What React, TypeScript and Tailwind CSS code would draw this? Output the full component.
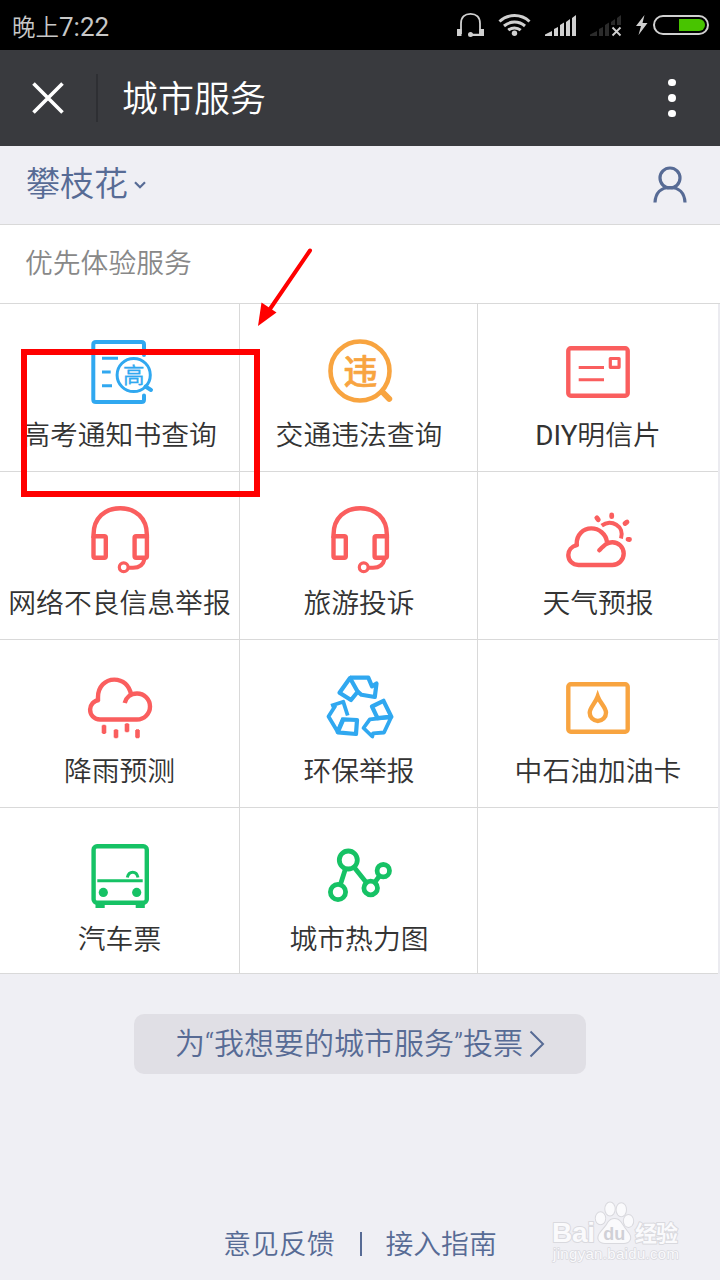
import type { ReactNode } from "react";
import clsx from "clsx";

const RED = "#fa5e5e";
const BLUE = "#30a8f0";
const ORANGE = "#f8a440";
const GREEN = "#16c265";

function Glyph({
  color,
  width = 4.4,
  className,
  children,
}: {
  color: string;
  width?: number;
  className?: string;
  children: ReactNode;
}) {
  return (
    <svg
      viewBox="0 0 71 72"
      className={clsx("w-[71px] h-[72px] shrink-0", className)}
      fill="none"
      stroke={color}
      strokeWidth={width}
      strokeLinejoin="round"
      aria-hidden="true"
    >
      {children}
    </svg>
  );
}

function ExamIcon() {
  return (
    <Glyph color={BLUE} width={4}>
      <path d="M60 19V8.5Q60 6 57.5 6H12Q9.3 6 9.3 8.5V63.5Q9.3 66 12 66H57.5Q60 66 60 63.5V59.5" strokeLinecap="round" />
      <path d="M18 22.3H34M18 36H26.7M18 49.7H28" strokeWidth={3} />
      <circle cx="49.7" cy="39" r="16.6" strokeWidth={3} />
      <path d="M61.5 50.5L67 54" strokeWidth={4} strokeLinecap="round" />
      <text x="49.7" y="46.5" fontSize="21.5" fontWeight="400" textAnchor="middle" fill={BLUE} stroke={BLUE} strokeWidth={0.3}>
        高
      </text>
    </Glyph>
  );
}

function ViolationIcon() {
  return (
    <Glyph color={ORANGE} width={4.6}>
      <circle cx="37" cy="35" r="29.5" />
      <path d="M59.5 56L66.2 62.8" strokeWidth={6} strokeLinecap="round" />
      <text x="37.5" y="48" fontSize="34" fontWeight="500" textAnchor="middle" fill={ORANGE} stroke={ORANGE} strokeWidth={0.6}>
        违
      </text>
    </Glyph>
  );
}

function PostcardIcon() {
  return (
    <Glyph color={RED}>
      <rect x="6.3" y="12.3" width="59.4" height="47.4" rx="2.5" />
      <path d="M16.7 31.4H42M16.7 43.7H42" strokeWidth={3} />
      <rect x="48.3" y="22.5" width="8.8" height="8.8" strokeWidth={3.2} />
    </Glyph>
  );
}

function HeadsetIcon({ className }: { className?: string }) {
  return (
    <Glyph color={RED} className={className}>
      <path d="M9.5 34V30.9C9.5 14 21 4.2 36.2 4.2S62.9 14 62.9 30.9V34" />
      <rect x="9.5" y="32.2" width="12.3" height="21.6" rx="1.5" />
      <rect x="50.6" y="32.2" width="12.3" height="21.6" rx="1.5" />
      <circle cx="39.7" cy="63.3" r="4.4" strokeWidth={3.2} />
      <path d="M44.5 63.7H49C56 63.7 59.5 60 60.5 55" strokeWidth={4} />
    </Glyph>
  );
}

function WeatherIcon() {
  return (
    <Glyph color={RED}>
      <path d="M14.7 42V39.5C14.7 31 21 24.4 29.3 24.4C37 24.4 44 30 45 38" />
      <path d="M14.7 41.2C9.5 42.5 6.3 46.5 6.3 51C6.3 56.5 10.5 61 16.5 61H50.3A11.4 11.4 0 0 0 50.3 38.2C45 38.2 42 41.5 37.3 46.3" strokeLinecap="round" />
      <path d="M39.7 21.6C49 14.5 63 22 59 34.5" strokeWidth={4} />
      <path d="M34.8 13.8L36.3 15.8M49.7 11V12.7M65 18L63 19.5M66 35.3L67.5 35.5" strokeWidth={4.8} strokeLinecap="round" />
    </Glyph>
  );
}

function RainIcon() {
  return (
    <Glyph color={RED}>
      <path d="M14 29V25C14 15 21 7.6 30.3 7.6C39 7.6 45.5 13.5 47 22.5" />
      <path d="M15.5 27.7C9.5 28.5 6.1 33 6.1 37.5C6.1 43 10 47.5 16 47.5H53A13 13 0 0 0 53 21.5C46.5 21.5 42 25.5 40.7 31" />
      <path d="M20 53.5V61M32 58V65.5M43 52V59.5M53.5 58V65.5" strokeWidth={4.6} />
      <path d="M20 52.7V62M32 57.3V66.3M43 51.3V60.3M53.5 57.3V66.3" strokeWidth={3} />
    </Glyph>
  );
}

function RecycleIcon() {
  return (
    <Glyph color={BLUE} width={4.2}>
      <path d="M27 6L16.5 20.7L28 28L34.7 19.7Z" />
      <path d="M27 5.7H45.3L49 14.3L53.5 11.5L51.8 25L38.5 22.8L34.7 19.7" />
      <path d="M8 33.8L20.3 29.8L24.7 43.5M12.5 33.5L5.5 44.5L14.5 59.5L20.3 46" strokeWidth={3.8} />
      <path d="M20.3 47.3L34 48L33 62L14.7 60.3Z" />
      <path d="M49 34.5L60.5 28.8L68.3 44.7L54.5 46.2Z" />
      <path d="M68.3 45L61 60.5L50 61.3L49.3 64.5L40.5 56L46.8 47.3L68.3 45" strokeWidth={3.8} />
    </Glyph>
  );
}

function FuelCardIcon() {
  return (
    <Glyph color={ORANGE}>
      <rect x="6.3" y="12.3" width="59.4" height="47.4" rx="2.5" />
      <path d="M35.7 24.5C33.5 31 27.7 35.5 27.7 40.8A8.1 8.1 0 0 0 44 40.8C44 35.5 38 31 35.7 24.5Z" strokeLinejoin="miter" strokeMiterlimit={8} />
    </Glyph>
  );
}

function BusIcon() {
  return (
    <Glyph color={GREEN}>
      <rect x="9.6" y="6.2" width="53.2" height="56.5" rx="3.5" />
      <path d="M13.3 40.7H58.7M43.3 37.5C45 30.5 52.5 30.5 54 37.5" strokeWidth={3} />
      <circle cx="19.3" cy="52.4" r="4.6" fill={GREEN} stroke="none" />
      <circle cx="52.7" cy="52.4" r="4.6" fill={GREEN} stroke="none" />
      <path d="M11.5 65.5H20.7M51.7 65.5H60.8" strokeWidth={5} />
    </Glyph>
  );
}

function HeatMapIcon() {
  return (
    <Glyph color={GREEN} width={4.8}>
      <path d="M25.3 20L15 52M25.3 20L47.7 48L60.3 30.7" />
      <circle cx="25.3" cy="20" r="9" fill="#fff" />
      <circle cx="15" cy="52" r="7.6" fill="#fff" />
      <circle cx="47.7" cy="48" r="6.8" fill="#fff" />
      <circle cx="60.3" cy="30.7" r="6.2" fill="#fff" />
    </Glyph>
  );
}

const services: { title: ReactNode; icon: ReactNode }[] = [
  { title: "高考通知书查询", icon: <ExamIcon /> },
  { title: "交通违法查询", icon: <ViolationIcon /> },
  { title: <><span className="font-['Roboto'] font-normal">DIY</span>明信片</>, icon: <PostcardIcon /> },
  { title: "网络不良信息举报", icon: <HeadsetIcon /> },
  { title: "旅游投诉", icon: <HeadsetIcon className="translate-x-px" /> },
  { title: "天气预报", icon: <WeatherIcon /> },
  { title: "降雨预测", icon: <RainIcon /> },
  { title: "环保举报", icon: <RecycleIcon /> },
  { title: "中石油加油卡", icon: <FuelCardIcon /> },
  { title: "汽车票", icon: <BusIcon /> },
  { title: "城市热力图", icon: <HeatMapIcon /> },
  { title: "", icon: null },
];

function StatusBar() {
  return (
    <div className="flex h-[50px] items-center justify-between bg-black pl-3 text-[#c8c8c8]">
      <div className="flex items-center pt-[3px] leading-none">
        <span className="text-[23.5px] font-[350]">晚上</span>
        <span className="font-['Roboto'] text-[26px]">7:22</span>
      </div>
      <svg viewBox="450 0 270 50" className="h-[50px] w-[270px]" fill="none" stroke="#d0d0d0" aria-hidden="true">
        {/* headset */}
        <path d="M461 34V23.5C461 17 465 13.8 470.5 13.8S480 17 480 23.5V34" strokeWidth="1.8" />
        <path d="M457 29H461.5V36H457ZM479.5 29H484V36H479.5ZM470 33.8H480V36H470Z" fill="#d0d0d0" stroke="none" />
        <circle cx="470.5" cy="34.5" r="2.5" fill="#d0d0d0" stroke="none" />
        {/* wifi */}
        <path d="M499.5 21.5A22 22 0 0 1 529.5 21.5M504 26A16 16 0 0 1 525 26M508.3 30.2A9.5 9.5 0 0 1 520.7 30.2" strokeWidth="3" />
        <circle cx="514.5" cy="33.3" r="2.7" fill="#d0d0d0" stroke="none" />
        {/* signal, sim 1 and sim 2 */}
        <path d="M545 36V34.5L552 31V36ZM554 36V29L558 27V36ZM560 36V25L564 22.5V36ZM566 36V22L570 19V36ZM572 36V18L576 15V36Z" fill="#d0d0d0" stroke="none" />
        <path d="M590 36V34.5L597 31V36ZM599 36V29L603 27V36ZM605 36V25L609 22.5V36ZM611 25V22L615 19V25ZM617 25V18L621 15V25Z" fill="#2b2b2b" stroke="none" />
        <path d="M612.5 27.5L620.5 35.5M620.5 27.5L612.5 35.5" strokeWidth="1.8" />
        {/* charging battery */}
        <path d="M644.5 15L636 26H641L638.5 35L647.5 23H642.5Z" fill="#d0d0d0" stroke="none" />
        <rect x="654" y="16" width="54" height="18" rx="9" strokeWidth="2" />
        <path d="M679 19H699A6 6 0 0 1 699 31H679Z" fill="#48c400" stroke="none" />
      </svg>
    </div>
  );
}

function TitleBar() {
  return (
    <div className="flex h-24 items-center bg-[#393a3e] text-white">
      <svg viewBox="0 0 32 32" className="ml-8 size-8" fill="none" stroke="currentColor" strokeWidth="3.6" aria-hidden="true">
        <path d="M1.5 1.5L30.5 30.5M30.5 1.5L1.5 30.5" />
      </svg>
      <div className="ml-8 h-12 w-0.5 bg-[#2e2f33]" />
      <h1 className="ml-6 pb-[5px] text-[36px] leading-none font-[350]">城市服务</h1>
      <div className="mr-[44.5px] ml-auto flex flex-col gap-2">
        <span className="size-[7.5px] rounded-full bg-white" />
        <span className="size-[7.5px] rounded-full bg-white" />
        <span className="size-[7.5px] rounded-full bg-white" />
      </div>
    </div>
  );
}

function LocationBar() {
  return (
    <div className="flex h-[79px] items-center border-b border-[#d9d9d9] pr-[33px] pl-[26px] text-[#576b95]">
      <span className="pb-[7px] text-[34px] leading-none font-[350]">攀枝花</span>
      <svg viewBox="0 0 12 8" className="ml-1.5 h-2 w-3" fill="none" stroke="currentColor" strokeWidth="2.2" aria-hidden="true">
        <path d="M1 1.2L6 6.2L11 1.2" />
      </svg>
      <svg viewBox="0 0 34 38" className="ml-auto h-[38px] w-[34px]" fill="none" stroke="currentColor" strokeWidth="3.2" aria-hidden="true">
        <circle cx="17" cy="12" r="10" />
        <path d="M2 36.5C2.5 27 8 21.5 17 21.5S31.5 27 32 36.5" />
      </svg>
    </div>
  );
}

function ServiceGrid() {
  return (
    <div className="grid grid-cols-[240px_238px_240px] grid-rows-[168px_168px_168px_166px] border-r-2 border-[#ebebf0]">
      {services.map(({ title, icon }, i) => (
        <div
          key={i}
          className={clsx(
            "flex flex-col items-center border-b border-[#d9d9d9] bg-white pt-8",
            i % 3 < 2 ? "border-r" : "pr-px",
          )}
        >
          {icon}
          <span
            className={clsx(
              "mt-[5px] text-[27.8px] leading-10 font-[350] whitespace-nowrap text-[#333]",
              i % 3 > 0 && "pl-px",
            )}
          >
            {title}
          </span>
        </div>
      ))}
    </div>
  );
}

function Highlight() {
  return (
    <>
      <div className="absolute top-[349px] left-[21px] h-[148px] w-[239px] border-6 border-[#f00]" />
      <svg viewBox="0 0 60 84" className="absolute top-[246px] left-[254px] h-[84px] w-[60px]" fill="#f00" aria-hidden="true">
        <path d="M56 4.5L16 63" stroke="#f00" strokeWidth="4" strokeLinecap="round" />
        <path d="M4 80L7.5 56.5L22.5 66.5Z" />
      </svg>
    </>
  );
}

function Watermark() {
  return (
    <svg
      viewBox="0 0 140 70"
      className="absolute top-[1197px] left-[548px] h-[70px] w-[140px] font-['Liberation_Sans','Noto_Sans_CJK_SC',sans-serif]"
      fill="#fafafc"
      stroke="#d9d9de"
      strokeWidth="2"
      strokeLinejoin="round"
      paintOrder="stroke"
    >
      <text x="4" y="45" fontSize="28" fontWeight="700" textLength="43">Bai</text>
      <ellipse cx="52.5" cy="21.3" rx="4.7" ry="6" />
      <ellipse cx="62" cy="12" rx="4.7" ry="6.5" />
      <ellipse cx="73.3" cy="12.7" rx="4.7" ry="6.5" />
      <ellipse cx="80.5" cy="24" rx="4.7" ry="6" />
      <path d="M60.5 25C58 30 54 33 51.5 37C48.5 42.5 52 46.5 58 46H75C81 46.5 84 42 81 37C78 33 75 29 72.5 25C69.5 21 63.5 21 60.5 25Z" />
      <text x="66.3" y="42.5" fontSize="18" fontWeight="700" textAnchor="middle" fill="#d0d0d6" stroke="none">du</text>
      <text x="87" y="44" fontSize="22" fontWeight="700" textLength="43">经验</text>
      <text x="5" y="62" fontSize="15" strokeWidth="1.5" textLength="126">jingyan.baidu.com</text>
    </svg>
  );
}

export default function App() {
  return (
    <div className="relative flex h-[1280px] w-[720px] flex-col overflow-hidden bg-[#efeff4] font-['Noto_Sans_CJK_SC',sans-serif]">
      <StatusBar />
      <TitleBar />
      <LocationBar />
      <h2 className="h-[79px] border-b border-[#d9d9d9] bg-white pl-[25px] text-[27.8px] leading-[73px] font-[350] text-[#888]">
        优先体验服务
      </h2>
      <ServiceGrid />

      <button className="mt-10 flex h-15 w-[452px] items-center justify-center gap-1.5 self-center rounded-[10px] bg-[#e0dfe5] text-[30px] font-[350] text-[#576b95]">
        <span className="pb-0.5 font-['Roboto','Noto_Sans_CJK_SC',sans-serif] whitespace-nowrap">为“我想要的城市服务”投票</span>
        <svg viewBox="0 0 16 28" className="h-7 w-4" fill="none" stroke="currentColor" strokeWidth="2" aria-hidden="true">
          <path d="M1.5 1.5L14 14L1.5 26.5" />
        </svg>
      </button>

      <footer className="mt-auto flex h-[72px] items-center justify-center text-[27.8px] font-[350] text-[#576b95]">
        <span className="pb-0.5">意见反馈</span>
        <span className="mr-6 ml-[25px] h-6 w-0.5 bg-[#576b95]" />
        <span className="pb-0.5">接入指南</span>
      </footer>

      <Highlight />
      <Watermark />
    </div>
  );
}
